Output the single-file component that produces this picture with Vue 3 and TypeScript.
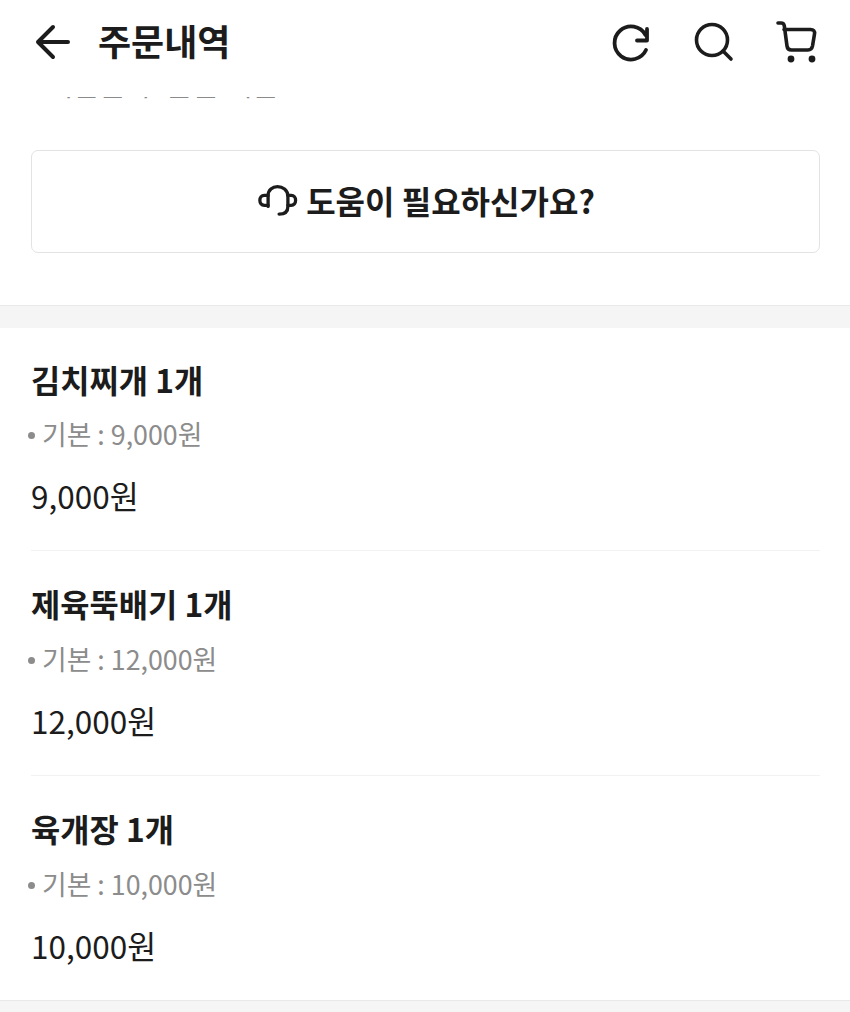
<script setup lang="ts">
interface Item { name: string; price: string }
const items: Item[] = [
  { name: '김치찌개 1개', price: '9,000원' },
  { name: '제육뚝배기 1개', price: '12,000원' },
  { name: '육개장 1개', price: '10,000원' },
]
</script>

<template>
  <div class="page">
    <header class="header">
      <div class="left">
        <svg class="back" width="40" height="40" viewBox="0 0 40 40" fill="none" stroke="#1c1c1c" stroke-width="4" stroke-linecap="round" stroke-linejoin="round">
          <path d="M5 20H35M20 5L5 20L20 35" />
        </svg>
        <h1 class="title">주문내역</h1>
      </div>
      <div class="right">
        <svg class="ic-refresh" width="44" height="44" viewBox="0 0 44 44" fill="none" stroke="#1c1c1c" stroke-width="3.8" stroke-linecap="round" stroke-linejoin="round">
          <path d="M36 28A16.5 16.5 0 1 1 35.5 13" />
          <path d="M37 7V18.5H27" />
        </svg>
        <svg class="ic-search" width="44" height="44" viewBox="0 0 44 44" fill="none" stroke="#1c1c1c" stroke-width="3.6" stroke-linecap="round" stroke-linejoin="round">
          <circle cx="20" cy="20" r="15.5" />
          <path d="M31 31L39 39" />
        </svg>
        <svg width="44" height="44" viewBox="0 0 44 44" fill="none" stroke="#1c1c1c" stroke-width="3.6" stroke-linecap="round" stroke-linejoin="round">
          <path d="M3 3H6C7.8 3 9 4 9.3 5.8L12 26C12.3 28.5 14 30 16.5 30H33C35.5 30 37 28.5 37.5 26L39.5 14C40 11 38.5 9.5 35.5 9.5H9" />
          <circle cx="16" cy="39" r="1.6" fill="#1c1c1c" />
          <circle cx="37" cy="39" r="1.6" fill="#1c1c1c" />
        </svg>
      </div>
    </header>

    <div class="clip"><p class="clipped">배달은 수 문은 내은</p></div>

    <section class="help">
      <button class="help-btn" type="button">
        <svg width="44" height="38" viewBox="0 0 40 34" fill="none" stroke="#1c1c1c" stroke-width="3" stroke-linecap="round" stroke-linejoin="round">
          <path d="M11 21V11C11 6 15 3 19.5 3C24 3 29 6 29 12V21C29 25 27 28 21 28" />
          <path d="M11 11H7.5C5 11 3.5 13 3.5 15.5C3.5 18 5 20 7.5 20H11" />
          <path d="M29 11H32C34.5 11 36 13 36 15.5C36 18 34.5 20 32 20H29" />
        </svg>
        <span class="help-label">도움이 필요하신가요?</span>
      </button>
    </section>

    <div class="gap"></div>

    <section class="list">
      <article v-for="item in items" :key="item.name" class="item">
        <h2 class="name">{{ item.name }}</h2>
        <p class="option"><span class="dot"></span>기본 : {{ item.price }}</p>
        <p class="price">{{ item.price }}</p>
      </article>
    </section>

    <div class="foot"></div>
  </div>
</template>

<style>
html, body { margin: 0; background: #fff; }
</style>

<style scoped>
.page {
  width: 850px;
  height: 1012px;
  overflow: hidden;
  background: #fff;
  color: #1c1c1c;
  font-family: "Noto Sans CJK KR", "Noto Sans", sans-serif;
}
.header {
  height: 97px;
  box-sizing: border-box;
  padding: 0 31px 13px 33px;
  display: flex;
  align-items: center;
  justify-content: space-between;
}
.left { display: flex; align-items: center; gap: 25px; }
.title { margin: -4px 0 0; font-size: 36px; font-weight: 700; line-height: 50px; }
.right { display: flex; align-items: center; gap: 40px; }
.ic-refresh { margin-top: 3px; }
.ic-search { margin-left: -2px; margin-right: -1px; }
.clip { height: 5px; overflow: hidden; position: relative; }
.clipped {
  margin: -32px 0 0 46px;
  font-size: 29px;
  line-height: 36px;
  color: #8a8a8a;
}
.help {
  height: 204px;
  box-sizing: border-box;
  padding: 48px 30px 0 31px;
  border-bottom: 1px solid #e9e9e9;
}
.help-btn {
  width: 100%;
  height: 103px;
  box-sizing: border-box;
  background: #fff;
  border: 1px solid #e3e3e3;
  border-radius: 7px;
  font: inherit;
  font-size: 32px;
  font-weight: 700;
  color: #1c1c1c;
  display: flex;
  align-items: center;
  justify-content: center;
  gap: 6px;
  padding: 0;
}
.help-label { margin-top: -4px; }
.gap { height: 22px; background: #f5f5f5; }
.list { padding: 0 30px 0 31px; }
.item {
  height: 222px;
  box-sizing: border-box;
  padding-top: 29px;
}
.item + .item { border-top: 1px solid #f2f2f2; height: 225px; padding-top: 30px; }
.name { margin: 0; font-size: 31.8px; font-weight: 700; line-height: 44px; }
.item .option { margin-top: 13px; }
.item:first-child .option { margin-top: 12px; }
.option {
  margin: 13px 0 0 -3px;
  font-size: 26.8px;
  line-height: 42px;
  color: #8c8c8c;
  display: flex;
  align-items: center;
  white-space: pre;
}
.dot {
  width: 7px; height: 7px; border-radius: 50%;
  background: #8c8c8c;
  margin-right: 7px;
  margin-top: 3px;
}
.price { margin: 18px 0 0; font-size: 31.5px; line-height: 44px; }
.foot {
  height: 12px;
  background: #f5f5f5;
  border-top: 1px solid #e9e9e9;
}
</style>
